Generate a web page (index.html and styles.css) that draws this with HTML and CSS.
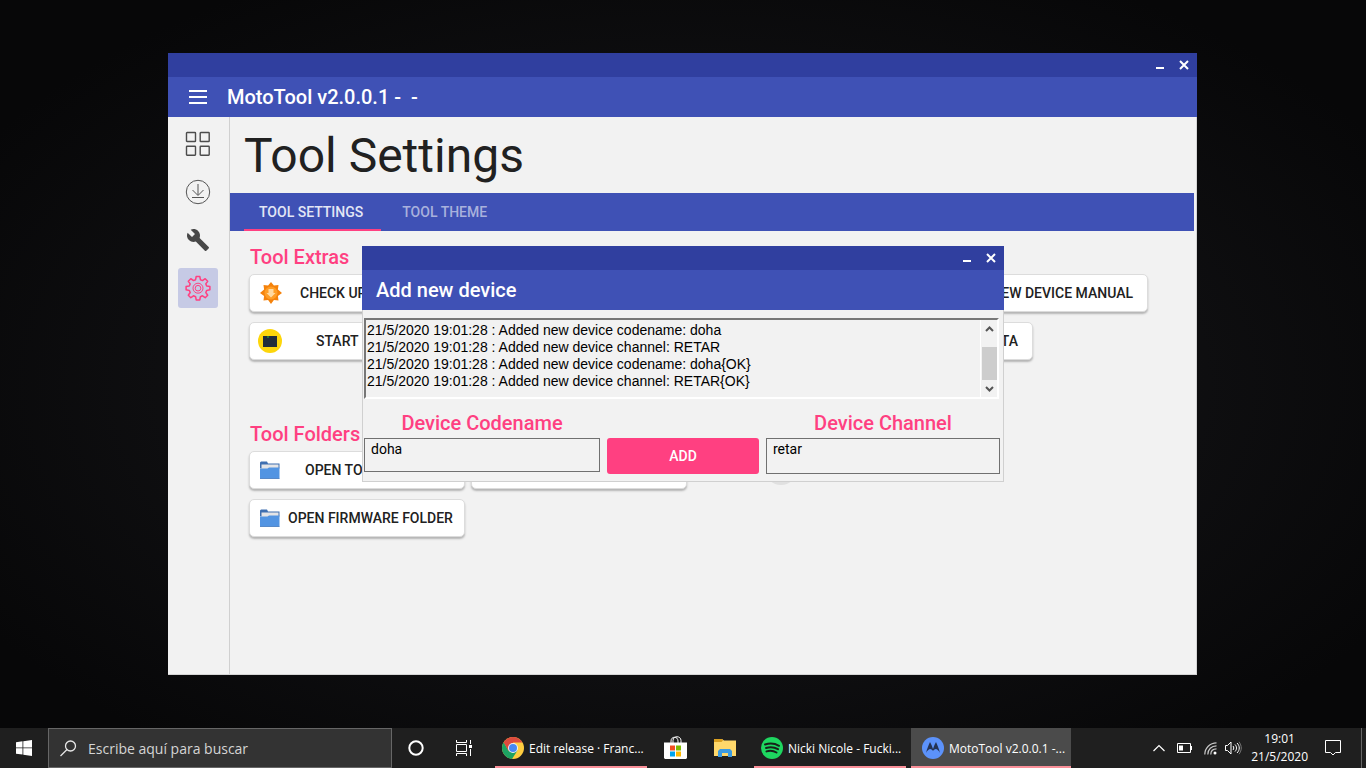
FILE: index.html
```html
<!DOCTYPE html>
<html lang="es">
<head>
<meta charset="utf-8">
<title>MotoTool v2.0.0.1</title>
<link rel="stylesheet" href="styles.css">
</head>
<body>
<svg width="0" height="0" class="defs" aria-hidden="true">
  <symbol id="min" viewBox="0 0 10 10"><path d="M1 8h8" stroke="currentColor" stroke-width="2"/></symbol>
  <symbol id="close" viewBox="0 0 10 10"><path d="M1 1l8 8M9 1L1 9" stroke="currentColor" stroke-width="2"/></symbol>
  <symbol id="folder" viewBox="0 0 20 18"><path d="M0 1.500L1 .5h6l1 2h11.500v5H0z" fill="#3f6fb0"/><path d="M1.500 3.500h17v5h-17z" fill="#e4e4e6"/><path d="M0 8l1-.5h6.500l1.500-1h10.500V17.500H0z" fill="#5294e2"/><path d="M0 17h19.500v.8H0z" fill="#4379bd"/></symbol>
</svg>
<main class="desktop">
  <section class="window">
    <div class="titlebar">
      <button class="win-btn" aria-label="Minimize"><svg><use href="#min"/></svg></button>
      <button class="win-btn" aria-label="Close"><svg><use href="#close"/></svg></button>
    </div>
    <header class="appbar">
      <button class="menu-btn" aria-label="Menu"><svg width="18" height="14" viewBox="0 0 18 14"><path d="M0 1h18M0 7h18M0 13h18" stroke="#fff" stroke-width="2"/></svg></button>
      <span class="app-title">MotoTool v2.0.0.1 -&nbsp; -</span>
    </header>
    <div class="window-body">
      <nav class="side">
        <button aria-label="Home"><svg width="26" height="26" viewBox="0 0 26 26" fill="none" stroke="#4c4c4c" stroke-width="1.4"><rect x="1.5" y="1.5" width="9" height="9" rx=".6"/><rect x="15.200" y="1.5" width="9" height="9" rx=".6"/><rect x="1.5" y="15.200" width="9" height="9" rx=".6"/><rect x="15.200" y="15.200" width="9" height="9" rx=".6"/></svg></button>
        <button aria-label="Downloads"><svg width="26" height="26" viewBox="0 0 26 26" fill="none" stroke="#555" stroke-width="1"><circle cx="13" cy="13" r="11.700"/><path d="M13 5v11M7.500 11l5.500 5.500 5.500-5.500M7 18.500h12"/></svg></button>
        <button aria-label="Tools"><svg width="24" height="24" viewBox="0 0 24 24" fill="#484848"><path d="M22.700 19l-9.100-9.100c.9-2.300.4-5-1.500-6.900-2-2-5-2.400-7.400-1.300L9 6 6 9 1.600 4.700C.4 7.100.9 10.100 2.900 12.100c1.900 1.900 4.600 2.400 6.900 1.500l9.100 9.100c.4.400 1 .4 1.400 0l2.300-2.300c.5-.4.5-1.100.1-1.400z"/></svg></button>
        <button class="current" aria-label="Settings"><svg width="26" height="26" viewBox="0 0 26 26" fill="none" stroke="#ff4081"><path stroke-width="1.500" stroke-linejoin="round" d="M11.200 1.500h3.600l.6 3.200 2.100.9 2.700-1.900 2.500 2.500-1.900 2.700.9 2.100 3.200.6v3.200l-3.200.6-.9 2.100 1.900 2.700-2.500 2.500-2.700-1.900-2.100.9-.6 3.200h-3.600l-.6-3.200-2.100-.9-2.700 1.900-2.500-2.500 1.900-2.700-.9-2.100-3.200-.6v-3.200l3.200-.6.9-2.100-1.900-2.700 2.500-2.500 2.700 1.900 2.100-.9z"/><circle cx="13" cy="13.200" r="5"/><circle cx="13" cy="13.200" r="2.800"/></svg></button>
      </nav>
      <div class="page">
        <h1>Tool Settings</h1>
        <div class="tabs" role="tablist">
          <button class="tab selected" role="tab" aria-selected="true">TOOL SETTINGS</button>
          <button class="tab" role="tab" aria-selected="false">TOOL THEME</button>
        </div>
        <section class="group">
          <h2>Tool Extras</h2>
          <div class="row">
            <button class="raised check"><svg width="22" height="22" viewBox="0 0 22 22"><path d="M11 0l2.900 3.500 4.600-.6-.6 4.600L22 11l-4.100 3 .6 4.600-4.600-.6L11 22l-2.900-4-4.600.6.600-4.600L0 11l4.100-3.500-.6-4.600 4.600.6z" fill="#f5820b"/><circle cx="11" cy="11" r="6.500" fill="#ff9d25"/><path d="M8.500 7h5v4h2L11 15.500 6.500 11h2z" fill="#ffd9a0"/></svg><span>CHECK UP</span></button>
            <button class="raised"></button>
            <button class="raised"></button>
            <button class="raised manual"><span>NEW DEVICE MANUAL</span></button>
          </div>
          <div class="row">
            <button class="raised start"><svg width="24" height="24" viewBox="0 0 24 24"><circle cx="12" cy="12" r="12" fill="#fdd60b"/><path d="M5 7h14v11H5z" fill="#202c3b"/><path d="M10 7v2" stroke="#20c040"/></svg><span>START</span></button>
            <button class="raised"></button>
            <button class="raised"></button>
            <button class="raised data"><span>DATA</span></button>
          </div>
        </section>
        <section class="group">
          <h2>Tool Folders</h2>
          <div class="row">
            <button class="raised tool"><svg width="20" height="18"><use href="#folder"/></svg><span>OPEN TOOL</span></button>
            <button class="raised"></button>
            <span class="knob"></span>
          </div>
          <div class="row">
            <button class="raised firmware"><svg width="20" height="18"><use href="#folder"/></svg><span>OPEN FIRMWARE FOLDER</span></button>
          </div>
        </section>
      </div>
    </div>
    <div class="overlay">
      <form class="dialog">
        <div class="titlebar">
          <button type="button" class="win-btn" aria-label="Minimize"><svg><use href="#min"/></svg></button>
          <button type="button" class="win-btn" aria-label="Close"><svg><use href="#close"/></svg></button>
        </div>
        <header class="appbar"><span class="app-title">Add new device</span></header>
        <div class="dialog-body">
          <div class="log">
            <textarea readonly rows="4" aria-label="Log">21/5/2020 19:01:28 : Added new device codename: doha
21/5/2020 19:01:28 : Added new device channel: RETAR
21/5/2020 19:01:28 : Added new device codename: doha{OK}
21/5/2020 19:01:28 : Added new device channel: RETAR{OK}</textarea>
            <div class="scroll">
              <svg width="9" height="6" viewBox="0 0 9 6"><path d="M1 5l3.500-3.500L8 5" fill="none" stroke="#555" stroke-width="2"/></svg>
              <div class="thumb"></div>
              <svg width="9" height="6" viewBox="0 0 9 6"><path d="M1 1l3.500 3.500L8 1" fill="none" stroke="#555" stroke-width="2"/></svg>
            </div>
          </div>
          <div class="fields">
            <div class="field"><label for="code">Device Codename</label><textarea id="code" rows="1">doha</textarea></div>
            <button type="button" class="add">ADD</button>
            <div class="field channel"><label for="chan">Device Channel</label><textarea id="chan" rows="1">retar</textarea></div>
          </div>
        </div>
      </form>
    </div>
  </section>
</main>
<footer class="taskbar">
  <button class="start-btn" aria-label="Inicio"><svg width="16" height="16" viewBox="0 0 16 16" fill="#fff"><path d="M0 2.200L6.500 1.300v6.200H0zM7.300 1.200L16 0v7.500H7.300zM0 8.300h6.500v6.300L0 13.700zM7.300 8.300H16V16l-8.700-1.200z"/></svg></button>
  <label class="search"><svg width="17" height="17" viewBox="0 0 17 17" fill="none" stroke="#e8e8e8" stroke-width="1.300"><circle cx="10.500" cy="6" r="5"/><path d="M7 9.500L.5 16"/></svg><input type="text" placeholder="Escribe aquí para buscar" aria-label="Escribe aquí para buscar"></label>
  <button class="tb" aria-label="Cortana"><svg width="16" height="16" viewBox="0 0 16 16"><circle cx="8" cy="8" r="6.700" fill="none" stroke="#fff" stroke-width="2"/></svg></button>
  <button class="tb" aria-label="Vista de tareas"><svg width="16" height="16" viewBox="0 0 16 16" fill="none" stroke="#fff"><path d="M.5 0v2.500h10V0M.5 16v-2.500h10V16M.5 4.500h10v7H.5zM14.500 0v4M14.500 9v7"/><path d="M13 5h3v3h-3z" fill="#fff" stroke="none"/></svg></button>
  <button class="task"><svg width="22" height="22" viewBox="0 0 22 22"><circle cx="11" cy="11" r="11" fill="#ffcd40"/><path d="M11 11L1.500 5.500A11 11 0 0 1 20.500 5.500H11z" fill="#dd4b3e"/><path d="M1.500 5.500A11 11 0 0 0 10 22l5.500-8.500L11 11l-4.700 2.800z" fill="#1da362"/><path d="M1.500 5.500L6.300 13.800 11 11V5.500z" fill="#dd4b3e"/><path d="M1.500 5.500L6.300 13.800 3 16A11 11 0 0 1 1.500 5.500z" fill="#1da362"/><circle cx="11" cy="11" r="5" fill="#f1f1f1"/><circle cx="11" cy="11" r="4" fill="#4688f4"/></svg><span>Edit release · Franc...</span></button>
  <button class="tb store" aria-label="Store"><svg width="23" height="24" viewBox="0 0 23 24"><path d="M7 7V5c0-5 7-5 7 0v2M9 7V4.500c0-5 8-5 8 0V7" fill="none" stroke="#fff"/><path d="M0 6.500h23V22l-1 1H1l-1-1z" fill="#fff"/><path d="M6 9.500h5v5H6z" fill="#f25022"/><path d="M12 9.500h5v5h-5z" fill="#7fba00"/><path d="M6 15.500h5v5H6z" fill="#00a4ef"/><path d="M12 15.500h5v5h-5z" fill="#ffb900"/></svg></button>
  <button class="tb explorer" aria-label="Explorador"><svg width="22" height="18" viewBox="0 0 22 18"><path d="M0 0h8l2 1.500h12V17H0z" fill="#ffd86b"/><path d="M0 0h8l1 1.500L7.500 3H0z" fill="#dba021"/><path d="M4 18v-6l2-2h10l2 2v6h-4v-4H8v4z" fill="#3c9be0"/></svg></button>
  <button class="task"><svg width="22" height="22" viewBox="0 0 22 22"><circle cx="11" cy="11" r="11" fill="#1ed760"/><path d="M4 7.500c5-1.500 10-1 14 1.300M5 11c4-1.200 8.500-.8 12 1.200M5.500 14.400c3.500-1 7-.7 10 1.100" fill="none" stroke="#17211a" stroke-width="2" stroke-linecap="round"/></svg><span>Nicki Nicole - Fucki...</span></button>
  <button class="task active"><svg width="22" height="22" viewBox="0 0 22 22"><circle cx="11" cy="11" r="11" fill="#5c92fa"/><path d="M4 16C5 12 6.500 8 8 5c1.200 2 2.200 4.500 3 7 .8-2.500 1.800-5 3-7 1.500 3 3 7 4 11-1-2-2.400-3.500-4-4-1.500.3-2.500 1-3 2-.5-1-1.500-1.700-3-2-1.600.5-3 2-4 4z" fill="#243354"/></svg><span>MotoTool v2.0.0.1 -...</span></button>
  <div class="tray">
    <svg width="12" height="8" viewBox="0 0 12 8"><path d="M.5 7L6 1.500 11.500 7" fill="none" stroke="#fff" stroke-width="1.200"/></svg>
    <svg width="15" height="10" viewBox="0 0 15 10"><path d="M.5 .5h13v9H.5z" fill="none" stroke="#fff"/><path d="M2 2.500h4v5H2zM14 3h1v4h-1z" fill="#fff"/></svg>
    <svg width="13" height="13" viewBox="0 0 13 13" fill="none" stroke="#c8c8c8" stroke-width="1.200"><path d="M.8 12.500C.8 6 6 .8 12.500.8M3.800 12.500c0-5 3.700-8.700 8.700-8.700M6.800 12.500c0-3.500 2.200-5.700 5.700-5.700"/><circle cx="11" cy="11" r="1.500" fill="#fff" stroke="none"/></svg>
    <svg width="17" height="14" viewBox="0 0 17 14" fill="none" stroke="#fff"><path d="M.5 4.500h2L6 1v12L2.500 9.500h-2zM8 5c1 1.200 1 2.800 0 4M10 3.500c2 2 2 5 0 7M12 2c3 3 3 7 0 10"/><path d="M14 .8c3 4 3 8.400 0 12.400" stroke="#777"/></svg>
    <time class="clock"><span>19:01</span><span>21/5/2020</span></time>
    <svg width="16" height="16" viewBox="0 0 16 16"><path d="M.5 .5h15v12h-5L8 15l-2.500-2.500h-5z" fill="none" stroke="#fff"/></svg>
    <span class="peek"></span>
  </div>
</footer>
</body>
</html>
```

FILE: styles.css
```css
* { box-sizing: border-box; }

body {
  margin: 0;
  min-height: 100vh;
  display: flex;
  flex-direction: column;
  background: radial-gradient(ellipse at 50% 50%, #18181a 0%, #0f0f11 50%, #070708 85%);
  font-family: Roboto, "Liberation Sans", sans-serif;
  font-size: 14px;
  color: #212121;
}

button {
  border: 0;
  padding: 0;
  margin: 0;
  background: none;
  color: inherit;
  font: inherit;
}

h1, h2 { margin: 0; }
svg { flex: none; display: block; }
.defs { position: absolute; }

.desktop {
  flex: 1;
  display: flex;
  padding: 53px 169px 53px 168px;
}

/* Windows */
.window {
  position: relative;
  flex: 1;
  min-width: 0;
  display: flex;
  flex-direction: column;
  background: #f2f2f2;
}

.titlebar {
  height: 24px;
  display: flex;
  justify-content: flex-end;
  align-items: center;
  padding-right: 1px;
  background: #303f9f;
  color: #fff;
}

.win-btn {
  width: 24px;
  height: 24px;
  display: grid;
  place-items: center;
}
.win-btn svg { width: 10px; height: 10px; }

.appbar {
  height: 40px;
  display: flex;
  align-items: center;
  background: #3f51b5;
  color: #fff;
}
.menu-btn { padding: 0 20px 0 21px; }
.app-title { font-size: 20px; font-weight: 500; }

.window-body {
  flex: 1;
  display: flex;
  border: solid #d5d5d5;
  border-width: 0 1px 1px 0;
}

.side {
  flex: none;
  width: 62px;
  padding: 7px 11px 0 10px;
  display: flex;
  flex-direction: column;
  gap: 8px;
  border-right: 1px solid #d0d0d0;
}
.side button {
  height: 40px;
  display: grid;
  place-items: center;
  border-radius: 3px;
}
.side .current { background: #c6cae5; }

.page { flex: 1; min-width: 0; }

h1 {
  height: 76px;
  padding-left: 14px;
  font-size: 48px;
  font-weight: 400;
  line-height: 78px;
}

.tabs {
  height: 38px;
  margin-right: 2px;
  padding-left: 14px;
  display: flex;
  gap: 6px;
  background: #3f51b5;
  color: #a9b1dd;
}
.tab {
  padding: 2px 18px 0 15px;
  font-weight: 500;
  border-bottom: 2px solid transparent;
}
.tab.selected { color: #e3e6f5; border-color: #ff4081; }

.group { padding: 12px 19px 0; min-height: 177px; }
h2 {
  padding-left: 1px;
  height: 31px;
  color: #ff4081;
  font-size: 20px;
  font-weight: 500;
  line-height: 28px;
}

.row { display: flex; gap: 6px; margin-bottom: 10px; }
.raised {
  width: 216px;
  height: 38px;
  padding: 0 10px;
  display: flex;
  align-items: center;
  border: 1px solid #dcdcdc;
  border-radius: 5px;
  background: #fff;
  box-shadow: 0 2px 2px #b5b5b5;
  font-weight: 500;
  white-space: nowrap;
}
.check { gap: 18px; }
.start { padding-left: 8px; gap: 34px; }
.tool { gap: 25px; }
.firmware { gap: 8px; }
.manual { width: 233px; justify-content: flex-end; padding-right: 14px; }
.data { width: 118px; justify-content: flex-end; padding-right: 14px; }
.knob {
  width: 34px;
  height: 34px;
  margin-left: 71px;
  border-radius: 50%;
  background: #e0e0e0;
}

/* Dialog */
.overlay {
  position: absolute;
  inset: 0;
  padding-left: 1px;
  display: grid;
  place-items: center;
}
.dialog { width: 642px; background: #f2f2f2; }
.dialog .appbar { padding-left: 14px; }
.dialog-body {
  padding: 8px 3px 7px 1px;
  border: 1px solid #d0d0d0;
  border-top: 0;
}

.log {
  display: flex;
  margin-right: 1px;
  border: 2px solid #fff;
  border-top-color: #777;
  border-left-color: #777;
}
.log textarea {
  flex: 1;
  height: 77px;
  padding: 2px 1px;
  border: 0;
  resize: none;
  overflow: hidden;
  background: transparent;
  color: #000;
  font: 14px/17px "Liberation Sans", Arial, sans-serif;
}
.scroll {
  width: 17px;
  padding: 6px 0 5px;
  display: flex;
  flex-direction: column;
  align-items: center;
  border-left: 1px solid #fff;
}
.thumb { width: 15px; height: 33px; margin: auto 0 6px; background: #cdcdcd; }

.fields {
  display: flex;
  gap: 7px;
  align-items: flex-end;
  padding-top: 11px;
}
.field {
  flex: 1;
  align-self: flex-start;
  display: flex;
  flex-direction: column;
}
.field.channel { flex: none; width: 234px; }
.field label {
  height: 28px;
  color: #ff4081;
  font-size: 20px;
  font-weight: 500;
  line-height: 26px;
  text-align: center;
}
.field textarea {
  height: 34px;
  padding: 2px 6px;
  border: 1px solid #707070;
  resize: none;
  overflow: hidden;
  background: #f2f2f2;
  color: #000;
  font: 14px/17px Roboto, sans-serif;
}
.field.channel textarea { height: 36px; }
.add {
  width: 152px;
  height: 36px;
  border-radius: 3px;
  background: #ff4081;
  color: #fff;
  font-weight: 500;
}

/* Taskbar */
.taskbar {
  height: 40px;
  display: flex;
  align-items: stretch;
  background: #1f1f1f;
  color: #fff;
  font-family: "Open Sans", "Noto Sans", sans-serif;
  font-size: 12px;
}
.start-btn, .tb {
  width: 48px;
  display: grid;
  place-items: center;
}
.search {
  width: 344px;
  padding-left: 11px;
  display: flex;
  align-items: center;
  gap: 11px;
  border: 1px solid #666;
  background: #333;
}
.search input {
  flex: 1;
  min-width: 0;
  padding: 0;
  border: 0;
  background: none;
  color: #fff;
  font: 14px "Open Sans", "Noto Sans", sans-serif;
}
.search input::placeholder { color: #d5d5d5; }
.task {
  width: 152px;
  margin-left: 7px;
  padding: 2px 0 0 7px;
  display: flex;
  align-items: center;
  gap: 5px;
  border-bottom: 2px solid #f98f98;
  white-space: nowrap;
}
.store { width: 49px; margin-left: 4px; }
.explorer { width: 49px; }
.task.active { width: 160px; margin-left: 5px; padding-left: 11px; background: #4b4b4b; }
.explorer + .task { margin-left: 5px; }

.tray {
  margin-left: auto;
  display: flex;
  align-items: center;
  gap: 12px;
}
.clock {
  display: flex;
  flex-direction: column;
  align-items: center;
  margin: 0 5px 0 -3px;
  line-height: 18px;
}
.tray svg:nth-of-type(4) { margin-left: -4px; }
.peek { width: 5px; height: 40px; margin-left: 8px; border-left: 1px solid #666; }
```
